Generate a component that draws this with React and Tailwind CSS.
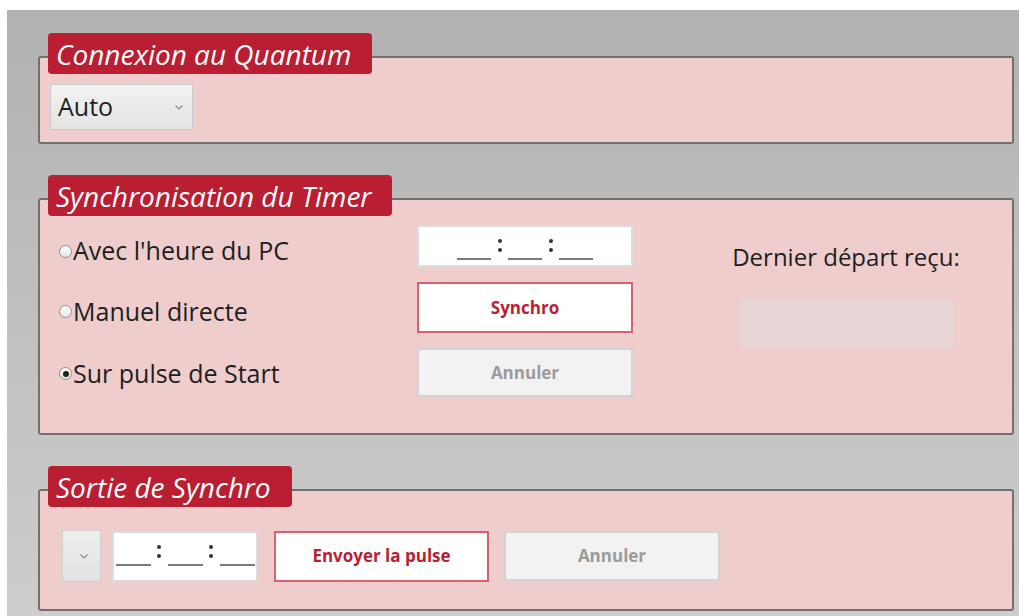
import React from "react";

const font = { fontFamily: '"Open Sans", "Noto Sans", sans-serif' };

function Chevron({ className = "" }) {
  return (
    <svg width="8" height="5" viewBox="0 0 8 5" className={className}>
      <polyline points="0.5,0.5 4,4 7.5,0.5" fill="none" stroke="#8a8a8a" strokeWidth="1.2" />
    </svg>
  );
}

function Group({ title, children, className = "" }) {
  return (
    <div className={`rounded-[3px] border-2 border-[#707070] bg-[#efcdcc] ${className}`}>
      <div className="-mt-[25px] ml-[8px] flex h-[41px] w-fit items-center rounded-[4px] bg-[#b91e33] pl-[8px] pr-[21px] text-[28px] italic leading-none text-white">
        {title}
      </div>
      {children}
    </div>
  );
}

function Colon({ mb }) {
  return (
    <div className={`flex w-[17px] flex-col items-center gap-[5px] ${mb}`}>
      <span className="h-[4px] w-[4px] rounded-full bg-[#333]" />
      <span className="h-[4px] w-[4px] rounded-full bg-[#333]" />
    </div>
  );
}

function TimeMask({ seg, pb, colonMb }) {
  return (
    <div className={`flex items-end justify-center ${pb}`}>
      <span className={`h-[2px] ${seg} bg-[#7a7a7a]`} />
      <Colon mb={colonMb} />
      <span className={`h-[2px] ${seg} bg-[#7a7a7a]`} />
      <Colon mb={colonMb} />
      <span className={`h-[2px] ${seg} bg-[#7a7a7a]`} />
    </div>
  );
}

function Radio({ checked, label }) {
  return (
    <div className="flex items-center">
      <span className="flex h-[13px] w-[13px] items-center justify-center rounded-full border border-[#8d8d8d] bg-gradient-to-b from-white to-[#e6e6e6]">
        {checked && <span className="h-[6px] w-[6px] rounded-full bg-[#222]" />}
      </span>
      <span className="ml-[1px] text-[25px] text-[#1e1e1e]">{label}</span>
    </div>
  );
}

export default function App() {
  return (
    <div className="min-h-[616px] w-[1019px] bg-white pl-[7px] pt-[10px]" style={font}>
      <div className="h-[606px] bg-gradient-to-b from-[#b2b2b2] to-[#cdcdcd] pl-[31px] pr-[5px] pt-[46px]">
        {/* Connexion */}
        <Group title="Connexion au Quantum" className="pb-[12px]">
          <div className="ml-[10px] mt-[10px] flex h-[46px] w-[143px] items-center justify-between border border-[#c9c9c9] bg-gradient-to-b from-[#f2f2f2] to-[#e4e4e4] pl-[7px] pr-[9px]">
            <span className="text-[25px] text-[#1e1e1e]">Auto</span>
            <Chevron />
          </div>
        </Group>

        {/* Synchronisation */}
        <Group title="Synchronisation du Timer" className="mt-[54px] pb-[36px]">
          <div className="mt-[9px] flex">
            <div className="flex w-[377px] flex-col gap-[15px] pl-[19px]">
              <div className="flex h-[42px] items-center pt-[10px]">
                <Radio label="Avec l'heure du PC" />
              </div>
              <div className="flex h-[51px] items-center pt-[8px]">
                <Radio label="Manuel directe" />
              </div>
              <div className="flex h-[49px] items-center pt-[2px]">
                <Radio checked label="Sur pulse de Start" />
              </div>
            </div>
            <div className="flex w-[216px] flex-col gap-[15px]">
              <div className="h-[42px] border-2 border-[#dcdcdc] bg-white">
                <TimeMask seg="w-[34px]" pb="h-full pb-[5px]" colonMb="mb-[8px]" />
              </div>
              <button className="h-[51px] border-2 border-[#d9606f] bg-white text-[17px] font-bold text-[#b91e33]">
                Synchro
              </button>
              <button className="h-[49px] border-2 border-[#d2d2d2] bg-[#f2f2f2] text-[17px] font-bold text-[#9b9b9b]">
                Annuler
              </button>
            </div>
            <div className="ml-[93px] flex w-[240px] flex-col items-center">
              <span className="mt-[14px] text-[24px] text-[#1e1e1e]">Dernier départ reçu:</span>
              <div className="mt-[25px] h-[48px] w-[213px] bg-[#e8d6d6]" />
            </div>
          </div>
        </Group>

        {/* Sortie */}
        <Group title="Sortie de Synchro" className="mt-[54px] pb-[27px]">
          <div className="ml-[22px] mt-[23px] flex items-center">
            <div className="flex h-[52px] w-[39px] items-center justify-center border border-[#cfcfcf] bg-gradient-to-b from-[#eeeeee] to-[#e2e2e2] pl-[4px]">
              <Chevron />
            </div>
            <div className="ml-[11px] h-[51px] w-[146px] border-2 border-[#dcdcdc] bg-white">
              <TimeMask seg="w-[35px]" pb="h-full pb-[14px]" colonMb="mb-[8px]" />
            </div>
            <button className="ml-[16px] h-[51px] w-[215px] border-2 border-[#d9606f] bg-white text-[17px] font-bold text-[#b91e33]">
              Envoyer la pulse
            </button>
            <button className="ml-[15px] h-[50px] w-[216px] border-2 border-[#d2d2d2] bg-[#f2f2f2] text-[17px] font-bold text-[#9b9b9b]">
              Annuler
            </button>
          </div>
        </Group>
      </div>
    </div>
  );
}
